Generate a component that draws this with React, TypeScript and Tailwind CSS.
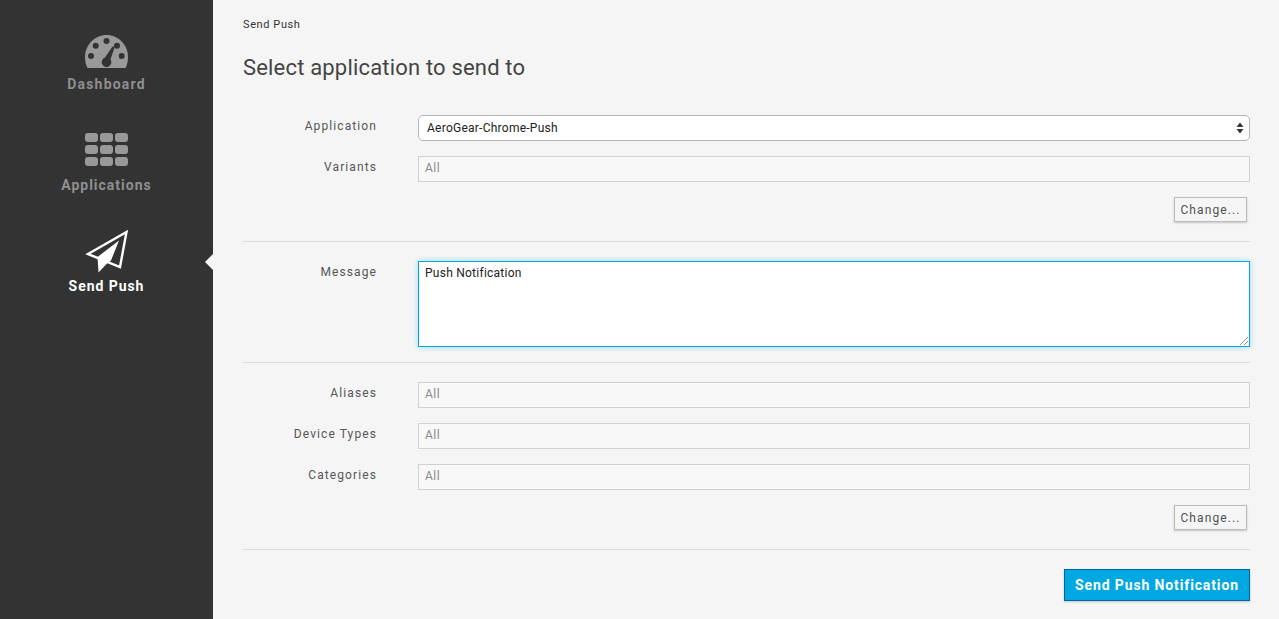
const font = "font-['Roboto',sans-serif]";

function DashboardIcon() {
  return (
    <svg width="44" height="33" viewBox="0 0 44 33" className="block">
      <path fill="#999" d="M2.500 33C.9 30 0 26.500 0 22 0 9.900 9.800 0 21.500 0S43 9.900 43 22c0 4.500-.9 8-2.500 11H2.500Z" />
      <circle cx="21.500" cy="6" r="3" fill="#333" />
      <circle cx="10.700" cy="10.800" r="3" fill="#333" />
      <circle cx="32" cy="10.800" r="3" fill="#333" />
      <circle cx="6" cy="21" r="3" fill="#333" />
      <circle cx="36.700" cy="21" r="3" fill="#333" />
      <path fill="#333" d="M27.500 11.500 29.700 12 25.500 24.500a4.800 4.800 0 1 1-5.500-1.900Z" />
    </svg>
  );
}

function GridIcon() {
  const cells = [0, 1, 2, 3, 4, 5, 6, 7, 8];
  return (
    <div className="grid grid-cols-[13px_13px_13px] gap-x-[2px] gap-y-[3px]">
      {cells.map((c) => (
        <div key={c} className="h-[9px] rounded-[3px] bg-[#999]" />
      ))}
    </div>
  );
}

function PlaneIcon() {
  return (
    <svg width="44" height="43" viewBox="0 0 44 43" className="block">
      <path fill="none" stroke="#fff" strokeWidth="2.400" d="M41.500 2 3 24 35 37 41.500 2Z" />
      <path fill="#fff" d="M34 10.500 12.500 27 13.500 42.500 21.500 34 26 30.500Z" />
    </svg>
  );
}

function NavItem({ icon, label, active, pad, tracking }: { icon: React.ReactNode; label: string; active?: boolean; pad: string; tracking: string }) {
  return (
    <div className="flex h-[101px] flex-col items-center">
      <div className={`flex h-[51px] items-end ${pad}`}>{icon}</div>
      <div className={`text-[14px] leading-[18px] font-bold ${tracking} ${active ? 'text-white' : 'text-[#8f8f8f]'}`}>
        {label}
      </div>
    </div>
  );
}

function Row({ label, children }: { label: string; children: React.ReactNode }) {
  return (
    <div className="flex">
      <div className="w-[134px] pt-[2px] text-right text-[12px] leading-[18px] tracking-[1.1px] text-[#555]">{label}</div>
      <div className="ml-[41px] flex-1">{children}</div>
    </div>
  );
}

function ReadOnly() {
  return (
    <div className="h-[26px] border border-[#d1d1d1] bg-[#f8f8f8] pl-[6px] text-[12px] leading-[22px] tracking-[0.5px] text-[#8a8a8a]">All</div>
  );
}

function ChangeButton() {
  return (
    <div className="flex justify-end pr-[3px]">
      <button className="h-[25px] w-[73px] border border-[#bbb] bg-[#f5f5f5] text-[12px] tracking-[1.1px] text-[#4d5258] shadow-[0_1px_2px_rgba(0,0,0,0.2)]">
        Change...
      </button>
    </div>
  );
}

export default function App() {
  return (
    <div className={`flex h-screen overflow-hidden bg-[#f5f5f5] ${font}`}>
      {/* Sidebar */}
      <aside className="relative w-[213px] shrink-0 bg-[#333] pt-[24px]">
        <NavItem icon={<DashboardIcon />} label="Dashboard" pad="pb-[7px]" tracking="tracking-[1.2px]" />
        <NavItem icon={<GridIcon />} label="Applications" pad="pb-[10px]" tracking="tracking-[1px]" />
        <NavItem icon={<PlaneIcon />} label="Send Push" active pad="pb-[4px]" tracking="tracking-[0.95px]" />
        <div className="absolute top-[254px] right-0 h-0 w-0 border-y-[8px] border-r-[8px] border-y-transparent border-r-[#f5f5f5]" />
      </aside>

      {/* Main content */}
      <main className="flex-1 pr-[29px] pl-[30px]">
        <div className="pt-[17px] text-[11px] leading-[16px] tracking-[0.6px] text-[#333]">Send Push</div>
        <h1 className="mt-[23px] text-[22px] leading-[24px] font-normal tracking-[0.18px] text-[#444]">Select application to send to</h1>

        <div className="mt-[35px] flex flex-col gap-[15px]">
          <Row label="Application">
            <div className="flex h-[26px] items-center justify-between rounded-[5px] border border-[#b5b5b5] bg-white pr-[5px] pl-[8px] text-[12px] tracking-[0.25px] text-[#222]">
              <span>AeroGear-Chrome-Push</span>
              <svg width="8" height="12" viewBox="0 0 8 12" className="block">
                <path fill="#333" d="M4 0.500 7.500 5H0.500ZM4 11.500 0.500 7H7.500Z" />
              </svg>
            </div>
          </Row>
          <Row label="Variants">
            <ReadOnly />
          </Row>
          <ChangeButton />
        </div>

        <hr className="mt-[19px] border-[#ddd]" />

        <div className="mt-[19px]">
          <Row label="Message">
            <div className="relative h-[86px] border border-[#00a8e1] bg-white px-[6px] py-[3px] text-[12px] leading-[16px] tracking-[0.25px] text-[#222] shadow-[0_0_6px_rgba(0,168,225,0.35)]">
              Push Notification
              <svg width="8" height="8" viewBox="0 0 8 8" className="absolute right-px bottom-px">
                <path stroke="#777" strokeWidth="0.800" d="M0 8 8 0M4 8 8 4" />
              </svg>
            </div>
          </Row>
        </div>

        <hr className="mt-[15px] border-[#ddd]" />

        <div className="mt-[19px] flex flex-col gap-[15px]">
          <Row label="Aliases">
            <ReadOnly />
          </Row>
          <Row label="Device Types">
            <ReadOnly />
          </Row>
          <Row label="Categories">
            <ReadOnly />
          </Row>
          <ChangeButton />
        </div>

        <hr className="mt-[19px] border-[#ddd]" />

        <div className="mt-[19px] flex justify-end">
          <button className="h-[32px] w-[186px] border border-[#00659c] bg-[#00a8e1] text-[14px] font-bold tracking-[0.87px] text-white shadow-[0_1px_2px_rgba(0,0,0,0.2)]">
            Send Push Notification
          </button>
        </div>
      </main>
    </div>
  );
}
